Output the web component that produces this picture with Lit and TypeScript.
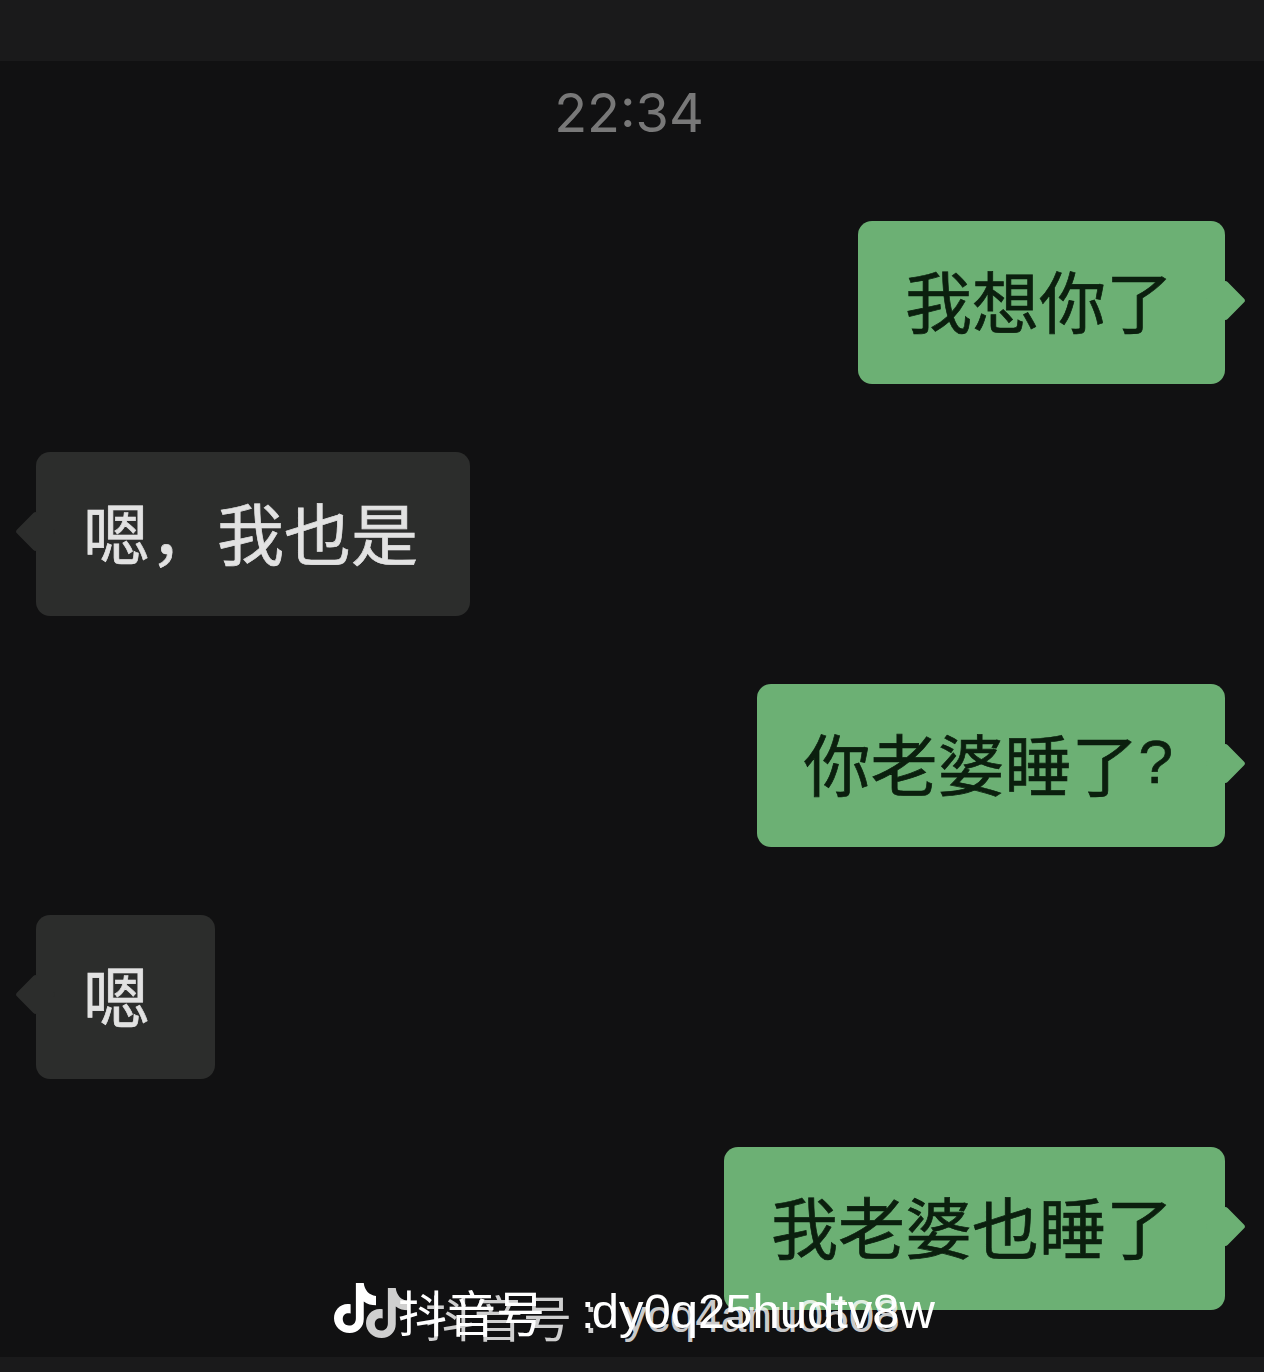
import { LitElement, html, css } from "lit";
import { customElement } from "lit/decorators.js";

const logo = html`<svg class="logo" viewBox="0 0 48 54" preserveAspectRatio="none" aria-hidden="true"><path d="M25 0h9c1 8 6 13 14 14v10c-5 0-10-1-14-4v19c0 9-7 15-16 15C8 54 0 47 0 38s8-17 19-15v10c-5-1-9 1-9 6 0 4 3 7 7 7 5 0 8-3 8-8z" fill="currentColor"/></svg>`;

@customElement("app-root")
export class AppRoot extends LitElement {
  static styles = css`
    :host { display: block; width: 1264px; height: 1372px; position: relative; overflow: hidden; background: #111112;
      font-family: "Noto Sans CJK SC", "Liberation Sans", sans-serif; }
    .page { display: flex; flex-direction: column; height: 100%; }
    .top { height: 61px; flex: none; background: #1a1a1b; }
    .time { height: 160px; flex: none; box-sizing: border-box; padding: 21px 6px 0 0; text-align: center; color: #787878; font: 400 54px/62px Inter, "Liberation Sans", sans-serif; }
    .chat { flex: 1; display: flex; flex-direction: column; gap: 68px; padding: 0 39px 0 36px; }
    .row { display: flex; }
    .row.me { justify-content: flex-end; }
    .bubble { position: relative; box-sizing: border-box; height: 163px; min-width: 179px; padding: 0 52px 8px 47px; border-radius: 14px; display: flex; align-items: center; font-size: 67px; font-weight: 400; -webkit-text-stroke: 0.7px currentColor; line-height: 1; white-space: nowrap; }
    .bubble.me { background: #6cb074; color: #0b1f0e; }
    .bubble.them { background: #2c2d2c; color: #e2e2e2; height: 164px; }
    .bubble::after { content: ""; position: absolute; top: 50%; width: 29px; height: 29px; margin-top: -17px; transform: rotate(45deg); border-radius: 3px; background: inherit; }
    .bubble.me::after { right: -15px; }
    .bubble.them::after { left: -15px; }
    .q { font-family: "Liberation Sans", sans-serif; font-size: 62px; }
    .bottom { height: 15px; flex: none; background: #1a1a1b; }
    .wm { position: absolute; display: flex; align-items: center; white-space: nowrap; color: #fff; font-size: 49px; line-height: 56px; }
    .id, .sep { font-family: "Liberation Sans", sans-serif; }
    .logo { width: 42px; height: 50px; flex: none; align-self: flex-start; }
    .a { left: 334px; top: 1283px; }
    .a .logo { margin-right: 22px; }
    .a .sep { margin: 0 0 0 36px; }
    .a .id { margin-left: -3px; }
    .b { left: 366px; top: 1288px; color: rgba(255,255,255,.8); }
    .b .logo { margin-right: 17px; }
    .b .id { font-size: 46px; }
    .b .sep { margin: 0 0 0 12px; }
    .b .id { margin-left: 26px; }
  `;

  render() {
    return html`
      <div class="page">
        <div class="top"></div>
        <div class="time">22:34</div>
        <div class="chat">
          <div class="row me"><div class="bubble me">我想你了</div></div>
          <div class="row"><div class="bubble them">嗯，我也是</div></div>
          <div class="row me"><div class="bubble me">你老婆睡了<span class="q">?</span></div></div>
          <div class="row"><div class="bubble them">嗯</div></div>
          <div class="row me"><div class="bubble me">我老婆也睡了</div></div>
        </div>
        <div class="bottom"></div>
      </div>
      <div class="wm b">${logo}<span>抖音号</span><span class="sep">:</span><span class="id">ycq4anu0508</span></div>
      <div class="wm a">${logo}<span>抖音号</span><span class="sep">:</span><span class="id">dy0q25hudtv8w</span></div>
    `;
  }
}
